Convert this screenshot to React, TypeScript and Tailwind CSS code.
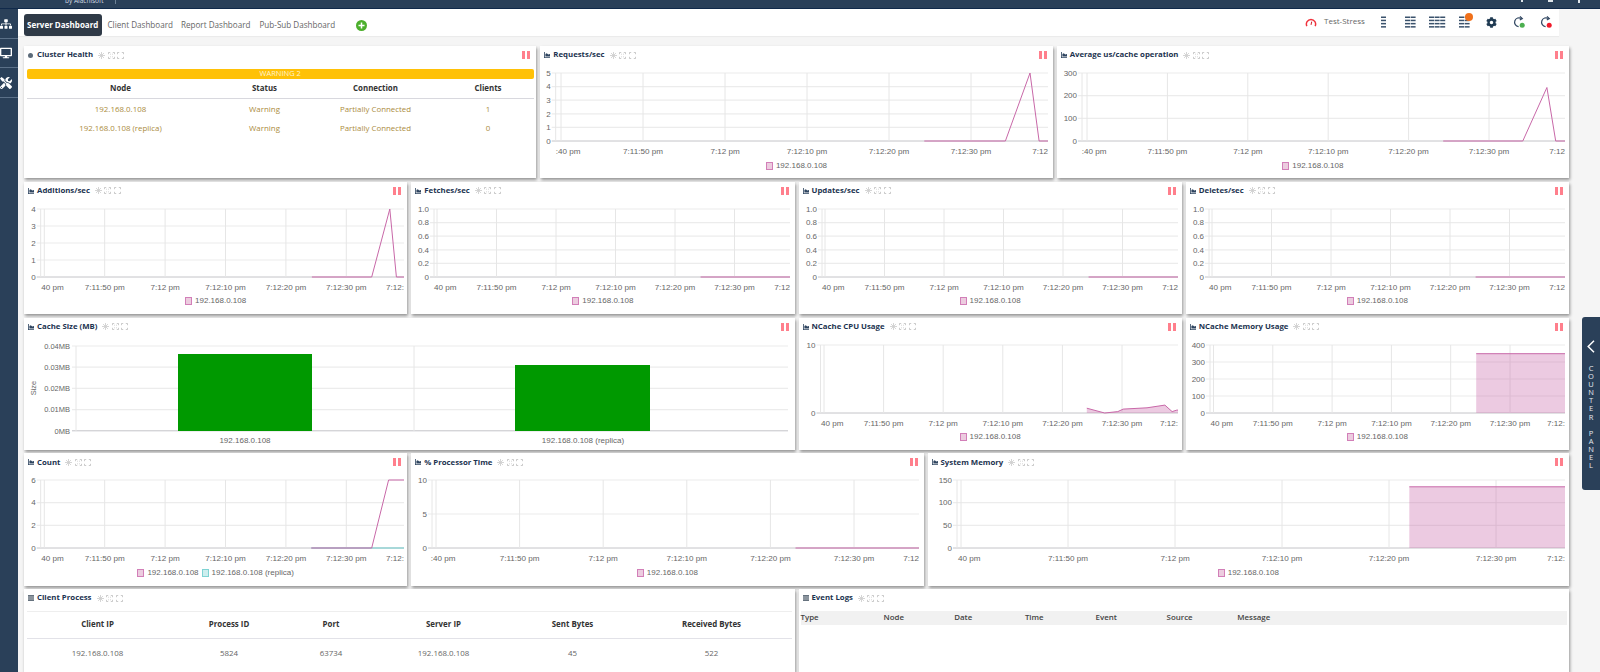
import { FaDesktop, FaSitemap, FaTools, FaCog } from 'react-icons/fa';

type Series = { points: number[][]; color: string; fill?: boolean };

const timeLabels = ['7:11:50 pm', '7:12 pm', '7:12:10 pm', '7:12:20 pm', '7:12:30 pm'];
const PINK = '#c868a8';
const TEAL = '#6fcfcf';

function Chart({ id, left, x0, pitch, right, top = 9, bottom = 77, yLabels, series, first = '40 pm', last = '7:12' }: {
  id: string; left: number; x0: number; pitch: number; right: number; top?: number; bottom?: number;
  yLabels: string[]; series: Series[]; first?: string; last?: string;
}) {
  const yMax = parseFloat(yLabels[0]);
  const tx = (t: number) => x0 + (t / 10) * pitch;
  const vy = (v: number) => bottom - (v / yMax) * (bottom - top);
  return (
    <svg className="block w-full h-[94px] [font-family:'Liberation_Sans',sans-serif]">
      <defs>
        <clipPath id={`clip-${id}`}>
          <rect x={left} y={0} width={right - left} height={94} />
        </clipPath>
      </defs>
      {yLabels.map((l, i) => {
        const y = top + (i / (yLabels.length - 1)) * (bottom - top);
        return (
          <g key={l}>
            <line x1={left - 4} x2={right} y1={y} y2={y} stroke={i === yLabels.length - 1 ? '#c4c4c8' : '#ececec'} strokeWidth={i === yLabels.length - 1 ? 1 : 1.2} />
            <text x={left - 5} y={y + 2.8} textAnchor="end" fontSize={8} fill="#666">{l}</text>
          </g>
        );
      })}
      <line x1={left} x2={left} y1={top} y2={bottom} stroke="#e6e6e6" />
      {[0, 1, 2, 3, 4, 5].map((i) => (
        <line key={i} x1={tx(i * 10)} x2={tx(i * 10)} y1={top} y2={bottom} stroke="#e6e6e6" />
      ))}
      <g clipPath={`url(#clip-${id})`}>
        {series.map((s, i) => {
          const pts = s.points.map(([t, v]) => `${tx(t).toFixed(1)},${vy(v).toFixed(1)}`).join(' ');
          return (
            <g key={i}>
              {s.fill && (
                <polygon
                  points={`${tx(s.points[0][0]).toFixed(1)},${bottom} ${pts} ${tx(s.points[s.points.length - 1][0]).toFixed(1)},${bottom}`}
                  fill="#c868a8"
                  fillOpacity={0.35}
                />
              )}
              <polyline points={pts} fill="none" stroke={s.color} strokeWidth={1} />
            </g>
          );
        })}
      </g>
      <text x={x0 + 19.5} y={89.5} textAnchor="end" fontSize={8.1} fill="#666">{first}</text>
      {timeLabels.map((l, i) => (
        <text key={l} x={tx((i + 1) * 10)} y={89.5} textAnchor="middle" fontSize={8.1} fill="#666">{l}</text>
      ))}
      <text x={right} y={89.5} textAnchor="end" fontSize={8.1} fill="#666">{last}</text>
    </svg>
  );
}

function BarChart() {
  const labels = ['0.04MB', '0.03MB', '0.02MB', '0.01MB', '0MB'];
  return (
    <svg className="block w-full h-[114px] [font-family:'Liberation_Sans',sans-serif]">
      {labels.map((l, i) => {
        const y = 10 + i * 21.2;
        return (
          <g key={l}>
            <line x1={48} x2={764} y1={y} y2={y} stroke={i === 4 ? '#c4c4c8' : '#ececec'} strokeWidth={i === 4 ? 1 : 1.2} />
            <text x={46} y={y + 2.8} textAnchor="end" fontSize={7.5} fill="#666">{l}</text>
          </g>
        );
      })}
      <line x1={52} x2={52} y1={10} y2={95} stroke="#e6e6e6" />
      <line x1={390} x2={390} y1={10} y2={95} stroke="#e6e6e6" />
      <rect x={154} y={18} width={134} height={77} fill="#009900" />
      <rect x={491} y={29} width={135} height={66} fill="#009900" />
      <text transform="translate(11.5,52) rotate(-90)" textAnchor="middle" fontSize={7.5} fill="#666">Size</text>
      <text x={221} y={106.5} textAnchor="middle" fontSize={8} fill="#666">192.168.0.108</text>
      <text x={559} y={106.5} textAnchor="middle" fontSize={8} fill="#666">192.168.0.108 (replica)</text>
    </svg>
  );
}

function Legend({ items }: { items: { label: string; border: string; fill: string }[] }) {
  return (
    <div className="flex h-[15px] items-center justify-center gap-[3px] [font-family:'Liberation_Sans',sans-serif] text-[8px] text-[#666]">
      {items.map((it) => (
        <div key={it.label} className="flex items-center gap-[3px]">
          <span className={`h-[8px] w-[7px] border ${it.border} ${it.fill}`} />
          <span>{it.label}</span>
        </div>
      ))}
    </div>
  );
}

const pinkLegend = { label: '192.168.0.108', border: 'border-[#d27fb8]', fill: 'bg-[#ecccdf]' };
const tealLegend = { label: '192.168.0.108 (replica)', border: 'border-[#7fd3d3]', fill: 'bg-[#cdeeee]' };

function ActionIcons() {
  return (
    <div className="flex items-center gap-[2.5px]">
      <svg width="7" height="7" viewBox="0 0 8 8" stroke="#cfcfcf" strokeWidth="1">
        <path d="M4 0v8M0 4h8M1.2 1.2l5.6 5.6M6.8 1.2L1.2 6.8" />
      </svg>
      <svg width="7" height="7" viewBox="0 0 8 8" fill="none" stroke="#c0c0c0" strokeWidth="1">
        <path d="M0.5 2.5v-2h2M5.5 .5h2v2M7.5 5.5v2h-2M2.5 7.5h-2v-2M2.5 2.5h.8M4.7 2.5h.8M2.5 5.5h.8M4.7 5.5h.8" />
      </svg>
      <svg width="7" height="7" viewBox="0 0 8 8" fill="none" stroke="#c0c0c0" strokeWidth="1">
        <path d="M0.5 2.5v-2h2M5.5 .5h2v2M7.5 5.5v2h-2M2.5 7.5h-2v-2" />
      </svg>
    </div>
  );
}

function TitleIcon({ kind }: { kind: 'dot' | 'chart' | 'table' }) {
  if (kind === 'dot') return <span className="h-[5px] w-[5px] rounded-full bg-[#5c6b7a]" />;
  if (kind === 'table')
    return (
      <svg width="6" height="6" viewBox="0 0 6 6" fill="#66727e">
        <path d="M0 0h6v1.2H0zM0 1.6h6v1.2H0zM0 3.2h6v1.2H0zM0 4.8h6V6H0z" />
      </svg>
    );
  return (
    <svg width="6" height="6" viewBox="0 0 6 6" fill="#2f4560">
      <path d="M0 0h.8v5.2H6V6H0zM1.4 2l1.4-.8 1.4 1.2L6 2v2.6H1.4z" />
    </svg>
  );
}

function Card({ span, title, icon = 'chart', pause = true, children }: {
  span: string; title: string; icon?: 'dot' | 'chart' | 'table'; pause?: boolean; children?: React.ReactNode;
}) {
  return (
    <section className={`${span} flex min-w-0 flex-col overflow-hidden bg-white shadow-[1px_2px_3px_rgba(0,0,0,0.4)]`}>
      <header className="flex h-[18px] shrink-0 items-center pl-[4px] pr-[6px]">
        <span className="flex w-[9px] items-center"><TitleIcon kind={icon} /></span>
        <h2 className="mr-[5px] whitespace-nowrap text-[7.8px] font-bold text-[#1c3350]">{title}</h2>
        <ActionIcons />
        {pause && (
          <div className="ml-auto flex gap-[2px]">
            <span className="h-[8px] w-[3px] bg-[#ff7f8c]" />
            <span className="h-[8px] w-[3px] bg-[#ff7f8c]" />
          </div>
        )}
      </header>
      {children}
    </section>
  );
}

function ClusterHealth() {
  const rows = [
    ['192.168.0.108', 'Warning', 'Partially Connected', '1'],
    ['192.168.0.108 (replica)', 'Warning', 'Partially Connected', '0'],
  ];
  const cols = 'grid grid-cols-[188px_100px_122px_103px] text-center';
  return (
    <div className="px-[2.5px] pt-[5px]">
      <div className="flex h-[10px] items-center justify-center rounded-[2px] bg-[#ffc107] text-[7.5px] text-[#fff3cf]">WARNING 2</div>
      <div className={`${cols} h-[20px] items-center border-b border-[#d8d8de] text-[7.9px] font-bold text-[#333]`}>
        <span>Node</span><span>Status</span><span>Connection</span><span>Clients</span>
      </div>
      <div className="pt-[1.5px]">
        {rows.map((r) => (
          <div key={r[0]} className={`${cols} h-[19px] items-center text-[7.9px] text-[#ab8c40]`}>
            {r.map((c, i) => <span key={i}>{c}</span>)}
          </div>
        ))}
      </div>
    </div>
  );
}

function ClientProcess() {
  const cols = 'grid grid-cols-[142px_121px_83px_142px_116px_162px] text-center';
  return (
    <div className="px-[2.5px] pt-[4px]">
      <div className={`${cols} h-[28px] items-center border-y border-t-[#eeeeee] border-b-[#e2e2e8] text-[7.9px] font-bold text-[#333]`}>
        <span>Client IP</span><span>Process ID</span><span>Port</span><span>Server IP</span><span>Sent Bytes</span><span>Received Bytes</span>
      </div>
      <div className={`${cols} h-[30px] items-center text-[7.9px] text-[#666]`}>
        <span>192.168.0.108</span><span>5824</span><span>63734</span><span>192.168.0.108</span><span>45</span><span>522</span>
      </div>
    </div>
  );
}

function EventLogs() {
  return (
    <div className="px-[2px] pt-[4px]">
      <div className="grid h-[14px] grid-cols-[83px_70.7px_70.7px_70.7px_71px_70.7px_1fr] items-center bg-[#f1f1f1] text-[7.9px] font-semibold text-[#444]">
        {['Type', 'Node', 'Date', 'Time', 'Event', 'Source', 'Message'].map((h) => <span key={h}>{h}</span>)}
      </div>
    </div>
  );
}

function ListIcon({ cols, rows = 4, cell = 5 }: { cols: number; rows?: number; cell?: number }) {
  return (
    <svg width={cols * (cell + 0.6)} height={rows * 3.2} fill="#3a526c">
      {Array.from({ length: cols }).map((_, c) =>
        Array.from({ length: rows }).map((__, r) => (
          <rect key={`${c}-${r}`} x={c * (cell + 0.6)} y={r * 3.2 + 0.5} width={cell} height={1.5} />
        )),
      )}
    </svg>
  );
}

function Toolbar() {
  return (
    <div className="flex items-center">
      <svg width="12" height="12" viewBox="0 0 13 12" fill="none" className="mr-[7px]">
        <path d="M2 10.5A5 5 0 1 1 11 10.5" stroke="#f0323c" strokeWidth="1.6" />
        <path d="M6.5 9l.8-3.5" stroke="#d0202c" strokeWidth="1.1" />
      </svg>
      <span className="-mt-[3px] mr-[6px] w-[40px] whitespace-nowrap text-[8px] text-[#666]">Test-Stress</span>
      <span className="flex w-[27px] justify-center"><ListIcon cols={1} /></span>
      <span className="flex w-[27px] justify-center"><ListIcon cols={2} /></span>
      <span className="flex w-[27px] justify-center"><ListIcon cols={3} /></span>
      <span className="relative flex w-[27px] justify-center">
        <ListIcon cols={2} />
        <span className="absolute left-[14px] -top-[3px] h-[8px] w-[8px] rounded-full bg-[#f0701a]" />
      </span>
      <span className="flex w-[27px] justify-center"><FaCog className="h-[11px] w-[11px] text-[#1f3a52]" /></span>
      {['#4caf50', '#f01a2a'].map((c) => (
        <span key={c} className="flex w-[27px] justify-center">
          <svg width="12" height="12" viewBox="0 0 12 12" fill="none">
            <path d="M8.5 2.6A4.4 4.4 0 1 0 5.6 10.6" stroke="#2f4560" strokeWidth="1.2" />
            <path d="M7 .4l2.4 2.2L6.8 4" stroke="#2f4560" strokeWidth="1.1" />
            <circle cx="9.2" cy="9.2" r="2.5" fill={c} />
          </svg>
        </span>
      ))}
    </div>
  );
}

const flat = [[44.3, 0], [62, 0]];
const spike = (peak: number) => [[44.3, 0], [54.2, 0], [57.2, peak], [58.3, 0], [62, 0]];
const zeroOne = ['1.0', '0.8', '0.6', '0.4', '0.2', '0'];
const counter = ['C', 'O', 'U', 'N', 'T', 'E', 'R', '\u00a0', 'P', 'A', 'N', 'E', 'L'];

export default function App() {
  return (
    <div className="relative flex h-[672px] w-[1600px] flex-col overflow-hidden bg-[#f5f5f5] [font-family:'Open_Sans',sans-serif]">
      {/* top bar, mostly cut off in the shot */}
      <div className="flex h-[9px] shrink-0 items-start overflow-hidden border-b border-[#10294a] bg-[#2a4059] text-white">
        <span className="ml-[65px] -mt-[3px] whitespace-nowrap text-[6.5px] leading-[8px] text-[#d5dce4]">by Alachisoft</span>
        <span className="ml-[11px] h-[4px] w-px bg-[#6d8196]" />
        <div className="ml-auto mr-[20px] flex gap-[25px]">
          <span className="ml-[2px] h-[2px] w-[2px] bg-[#dfe5ea]" />
          <span className="h-[2px] w-[5px] bg-[#dfe5ea]" />
          <span className="h-[3px] w-[2px] bg-[#dfe5ea]" />
        </div>
      </div>

      <div className="flex min-h-0 flex-1">
        <nav className="w-[17.5px] shrink-0 overflow-hidden bg-[#2a4059] text-white">
          <div className="flex h-[30px] items-center border-b border-[#5b7088]"><FaSitemap className="h-[12px] w-[12px]" /></div>
          <div className="flex h-[29px] items-center border-b border-[#5b7088]"><FaDesktop className="h-[12px] w-[12px]" /></div>
          <div className="flex h-[30px] items-center border-b border-[#5b7088]"><FaTools className="h-[12px] w-[12px]" /></div>
        </nav>

        <main className="flex min-w-0 flex-1 flex-col">
          <div className="mr-[41px] flex h-[27px] shrink-0 items-center justify-between bg-white pl-[6px] shadow-[0_1px_1px_rgba(0,0,0,0.04)]">
            <div className="mt-[5px] flex items-center whitespace-nowrap text-[8.1px] text-[#666]">
              <span className="flex h-[22px] w-[78.5px] items-center justify-center rounded-[3px] bg-[#2f3a47] text-[8px] font-bold text-white">Server Dashboard</span>
              <span className="ml-[5.5px] w-[73.5px]">Client Dashboard</span>
              <span className="w-[78.5px]">Report Dashboard</span>
              <span className="w-[96.5px]">Pub-Sub Dashboard</span>
              <svg width="11" height="11" viewBox="0 0 11 11">
                <circle cx="5.5" cy="5.5" r="5.5" fill="#4caf2c" />
                <path d="M5.5 2.5v6M2.5 5.5h6" stroke="#fff" strokeWidth="1.5" />
              </svg>
            </div>
            <Toolbar />
          </div>

          <div className="mr-[31px] ml-[6.5px] mt-[10px] grid min-h-0 flex-1 grid-cols-12 grid-rows-[132.4px_132.4px_132.4px_132.4px_1fr] gap-x-[4px] gap-y-[3.4px]">
            <Card span="col-span-4" title="Cluster Health" icon="dot"><ClusterHealth /></Card>
            <Card span="col-span-4" title="Requests/sec">
              <Chart id="req" first=":40 pm" left={15.7} x0={21} pitch={82} right={508} yLabels={['5', '4', '3', '2', '1', '0']} series={[{ points: spike(5), color: PINK }]} />
              <Legend items={[pinkLegend]} />
            </Card>
            <Card span="col-span-4" title="Average us/cache operation">
              <Chart id="avg" first=":40 pm" left={25} x0={30} pitch={80.4} right={508} yLabels={['300', '200', '100', '0']} series={[{ points: spike(236), color: PINK }]} />
              <Legend items={[pinkLegend]} />
            </Card>

            <Card span="col-span-3" title="Additions/sec">
              <Chart id="add" last="7:12:" left={16.7} x0={20.3} pitch={60.4} right={380} yLabels={['4', '3', '2', '1', '0']} series={[{ points: spike(4), color: PINK }]} />
              <Legend items={[pinkLegend]} />
            </Card>
            <Card span="col-span-3" title="Fetches/sec">
              <Chart id="fetch" left={23} x0={26} pitch={59.5} right={379} yLabels={zeroOne} series={[{ points: flat, color: PINK }]} />
              <Legend items={[pinkLegend]} />
            </Card>
            <Card span="col-span-3" title="Updates/sec">
              <Chart id="upd" left={23} x0={26} pitch={59.5} right={379} yLabels={zeroOne} series={[{ points: flat, color: PINK }]} />
              <Legend items={[pinkLegend]} />
            </Card>
            <Card span="col-span-3" title="Deletes/sec">
              <Chart id="del" left={23} x0={26} pitch={59.5} right={379} yLabels={zeroOne} series={[{ points: flat, color: PINK }]} />
              <Legend items={[pinkLegend]} />
            </Card>

            <Card span="col-span-6" title="Cache Size (MB)"><BarChart /></Card>
            <Card span="col-span-3" title="NCache CPU Usage">
              <Chart
                id="cpu" last="7:12:" left={21.5} x0={25} pitch={59.6} right={379} yLabels={['10', '0']}
                series={[{ fill: true, color: PINK, points: [[44.1, 0.7], [47.1, 0], [49.3, 0.2], [50.2, 0.58], [54.2, 0.77], [57.2, 1.16], [58.4, 0.2], [59.2, 0.43], [62, 0.43]] }]}
              />
              <Legend items={[pinkLegend]} />
            </Card>
            <Card span="col-span-3" title="NCache Memory Usage">
              <Chart id="mem" last="7:12:" left={24} x0={27.5} pitch={59.3} right={379} yLabels={['400', '300', '200', '100', '0']} series={[{ fill: true, color: PINK, points: [[44.3, 349], [62, 349]] }]} />
              <Legend items={[pinkLegend]} />
            </Card>

            <Card span="col-span-3" title="Count">
              <Chart
                id="count" last="7:12:" left={16.7} x0={20.3} pitch={60.4} right={380} yLabels={['6', '4', '2', '0']}
                series={[{ points: [[44.2, 0], [62, 0]], color: TEAL }, { points: [[44.2, 0], [54.2, 0], [57, 6], [62, 6]], color: PINK }]}
              />
              <Legend items={[pinkLegend, tealLegend]} />
            </Card>
            <Card span="col-span-4" title="% Processor Time">
              <Chart id="proc" first=":40 pm" left={21} x0={25} pitch={83.6} right={508} yLabels={['10', '5', '0']} series={[{ points: [[43, 0], [62, 0]], color: PINK }]} />
              <Legend items={[pinkLegend]} />
            </Card>
            <Card span="col-span-5" title="System Memory">
              <Chart id="sys" last="7:12:" left={29} x0={33} pitch={107} right={637} yLabels={['150', '100', '50', '0']} series={[{ fill: true, color: PINK, points: [[41.9, 135], [62, 135]] }]} />
              <Legend items={[pinkLegend]} />
            </Card>

            <Card span="col-span-6" title="Client Process" icon="table" pause={false}><ClientProcess /></Card>
            <Card span="col-span-6" title="Event Logs" icon="table" pause={false}><EventLogs /></Card>
          </div>
        </main>
      </div>

      {/* slide-out counter panel sits over the page edge */}
      <aside className="absolute left-[1582px] top-[317px] flex h-[173px] w-[18px] flex-col items-center rounded-l-[3px] bg-[#2a4059] pt-[23px] text-white">
        <svg width="8" height="13" viewBox="0 0 8 13" fill="none" stroke="#fff" strokeWidth="1.5">
          <path d="M7 .7L1.2 6.5 7 12.3" />
        </svg>
        <div className="mt-[11px] flex flex-col items-center text-[7.5px] leading-[8.1px] text-[#e4e9ee]">
          {counter.map((c, i) => <span key={i}>{c}</span>)}
        </div>
      </aside>
    </div>
  );
}
